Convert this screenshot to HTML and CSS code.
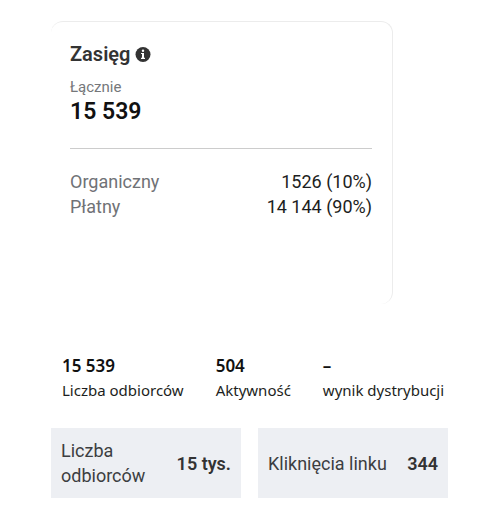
FILE: index.html
```html
<!DOCTYPE html>
<html lang="pl">
<head>
<meta charset="utf-8">
<title>Zasięg</title>
<link rel="stylesheet" href="styles.css">
</head>
<body>
<main class="page">
  <section class="card">
    <h1 class="card-title">Zasięg
      <svg class="info" viewBox="0 0 16 16" aria-hidden="true">
        <circle cx="8" cy="7.5" r="7.5" fill="#333"/>
        <circle cx="8" cy="3.8" r="1.2" fill="#fff"/>
        <path d="M6 6h3v4.8h1v1.1H6v-1.1h1V7.1H6z" fill="#fff"/>
      </svg>
    </h1>
    <p class="total-label">Łącznie</p>
    <p class="total">15 539</p>
    <dl class="split">
      <div class="split-row"><dt>Organiczny</dt><dd>1526 (10%)</dd></div>
      <div class="split-row"><dt>Płatny</dt><dd>14 144 (90%)</dd></div>
    </dl>
  </section>
  <section class="stats">
    <div><strong>15 539</strong><span>Liczba odbiorców</span></div>
    <div><strong>504</strong><span>Aktywność</span></div>
    <div><strong>–</strong><span>wynik dystrybucji</span></div>
  </section>
  <section class="tiles">
    <div class="tile"><span>Liczba odbiorców</span><strong>15 tys.</strong></div>
    <div class="tile"><span>Kliknięcia linku</span><strong>344</strong></div>
  </section>
</main>
</body>
</html>
```
FILE: styles.css
```css
* {
  box-sizing: border-box;
}

body,
h1,
p,
dl,
dd {
  margin: 0;
}

body {
  background: #fff;
  color: #1c1e21;
  font: 18px/25px Roboto, "Liberation Sans", sans-serif;
}

.page {
  padding: 21px 52px 13px 51px;
}

.card {
  min-height: 283px;
  margin-right: 55px;
  padding: 20px 20px 0 19px;
  border: 1px solid #ececec;
  border-width: 1px 1px 0 0;
  border-radius: 12px;
}

.card-title {
  display: flex;
  align-items: center;
  gap: 5px;
  font-size: 20px;
  font-weight: 600;
  line-height: 25px;
  color: #333;
}

.info {
  width: 16px;
  height: 16px;
}

.total-label {
  margin-top: 10px;
  font-size: 15px;
  line-height: 20px;
  color: #75777a;
}

.total {
  font-size: 23px;
  font-weight: 600;
  line-height: 30px;
  color: #111;
}

.split {
  margin-top: 21px;
  padding-top: 20px;
  border-top: 1px solid #ccc;
}

.split-row {
  display: flex;
  justify-content: space-between;
}

.split dt {
  color: #707276;
}

.stats {
  display: flex;
  gap: 32px;
  margin-top: 49px;
  padding-left: 11px;
  font: 15px/25px "Noto Sans", "Open Sans", sans-serif;
  white-space: nowrap;
}

.stats strong {
  display: block;
  font-size: 17px;
  font-weight: 600;
  color: #111;
}

.tiles {
  display: grid;
  grid-template-columns: 1fr 1fr;
  gap: 17px;
  margin-top: 25px;
}

.tile {
  display: flex;
  align-items: center;
  justify-content: space-between;
  gap: 20px;
  min-height: 70px;
  padding: 10px;
  background: #edeff3;
  color: #3c3e41;
}

.tile strong {
  font-weight: 600;
  color: #333;
  white-space: nowrap;
}
```
